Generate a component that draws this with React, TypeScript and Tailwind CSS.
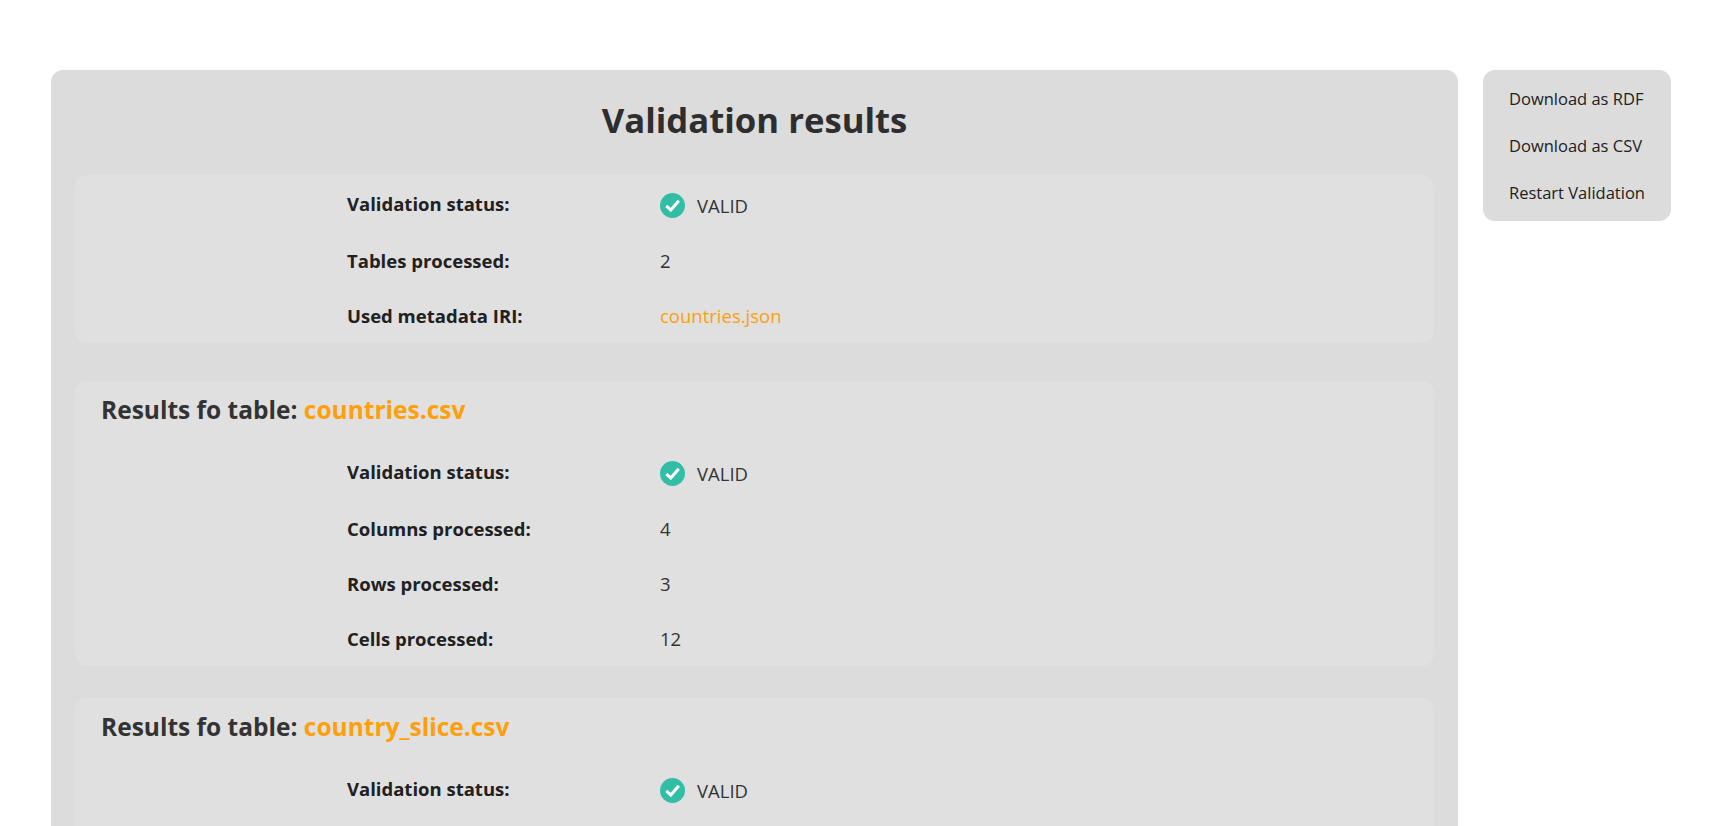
import type { ReactNode } from "react";

function Status() {
  return (
    <span className="flex items-center gap-[12px]">
      <svg className="h-[25px] w-[25px]" viewBox="0 0 25 25">
        <circle cx="12.5" cy="12.5" r="12.5" fill="#32bea6" />
        <polyline points="6.3,12.8 10.8,17 18.8,7.8" fill="none" stroke="#fff" strokeWidth="3" />
      </svg>
      <span className="pt-[2px]">VALID</span>
    </span>
  );
}

function Row({ label, children }: { label: string; children: ReactNode }) {
  return (
    <div className="flex h-[55px] items-center pl-[272px]">
      <div className="w-[313px] font-bold text-[#212121]">{label}</div>
      <div className="text-[#333333]">{children}</div>
    </div>
  );
}

function StatusRow() {
  return (
    <div className="flex h-[56px] items-center pl-[272px]">
      <div className="w-[313px] pb-[2px] font-bold text-[#212121]">Validation status:</div>
      <Status />
    </div>
  );
}

function TableHeading({ name }: { name: string }) {
  return (
    <h2 className="px-[26px] pt-[13px] pb-[19px] text-[24.5px] leading-[32px] font-bold text-[#333333]">
      Results fo table: <a className="text-[#ff9f0a]">{name}</a>
    </h2>
  );
}

export default function App() {
  return (
    <div className="flex h-screen flex-col overflow-hidden bg-white font-['Open_Sans',sans-serif] text-[18.5px] text-[#333333]">
      <div className="h-0 shrink-0 shadow-[0_0_8px_rgba(0,0,0,0.08)]" />
      <div className="flex items-start gap-[25px] pt-[70px] pl-[51px]">
        <main className="w-[1407px] shrink-0 rounded-xl bg-[#dcdcdc] px-[24px] pb-8">
          <h1 className="pt-[25px] pb-[30px] text-center text-[34.7px] leading-[50px] font-bold text-[#2e2e2e]">
            Validation results
          </h1>
          <section className="mb-[38px] rounded-xl bg-[#e0e0e0] pt-[2px]">
            <StatusRow />
            <Row label="Tables processed:">2</Row>
            <Row label="Used metadata IRI:">
              <a className="text-[#ff9f0a]">countries.json</a>
            </Row>
          </section>
          <div className="flex flex-col gap-[32px]">
            <section className="rounded-xl bg-[#e0e0e0]">
              <TableHeading name="countries.csv" />
              <StatusRow />
              <Row label="Columns processed:">4</Row>
              <Row label="Rows processed:">3</Row>
              <Row label="Cells processed:">12</Row>
            </section>
            <section className="min-h-[200px] rounded-xl bg-[#e0e0e0]">
              <TableHeading name="country_slice.csv" />
              <StatusRow />
            </section>
          </div>
        </main>
        <aside className="flex w-[188px] shrink-0 flex-col gap-[25px] rounded-xl bg-[#dcdcdc] px-[26px] pt-[18px] pb-[17px] text-[16.5px] leading-[22px] text-[#212121]">
          <a>Download as RDF</a>
          <a>Download as CSV</a>
          <a>Restart Validation</a>
        </aside>
      </div>
    </div>
  );
}
